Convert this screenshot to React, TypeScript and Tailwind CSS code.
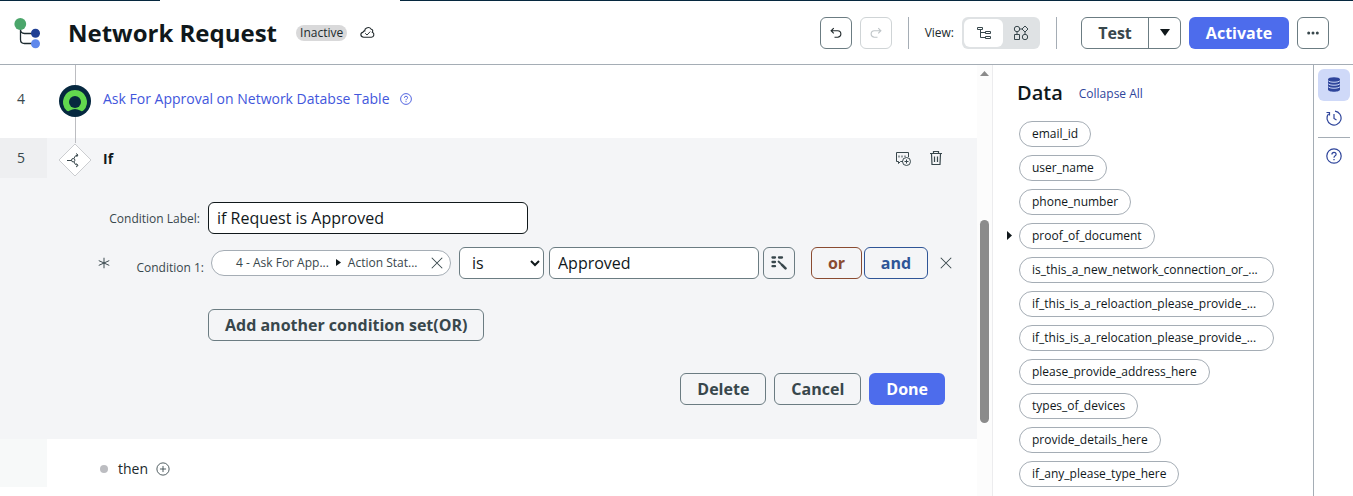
import type { ReactNode } from "react";

const fields = [
  { name: "email_id" },
  { name: "user_name" },
  { name: "phone_number" },
  { name: "proof_of_document", expandable: true },
  { name: "is_this_a_new_network_connection_or_...", wide: true },
  { name: "if_this_is_a_reloaction_please_provide_...", wide: true },
  { name: "if_this_is_a_relocation_please_provide_...", wide: true },
  { name: "please_provide_address_here" },
  { name: "types_of_devices" },
  { name: "provide_details_here" },
  { name: "if_any_please_type_here" },
];

function Icon({ size = 16, className = "", children }: { size?: number; className?: string; children: ReactNode }) {
  return (
    <svg
      width={size}
      height={size}
      viewBox="0 0 16 16"
      fill="none"
      stroke="currentColor"
      className={`shrink-0 ${className}`}
      aria-hidden="true"
    >
      {children}
    </svg>
  );
}

function FlowLogo() {
  return (
    <svg width="28" height="32" viewBox="0 0 28 32" fill="none" className="shrink-0" aria-hidden="true">
      <path d="M6.500 10v12.500q0 4 4 4H21M6.500 12q0 4.500 4 4.500H21" stroke="#1d2b30" strokeWidth="1.300" />
      <circle cx="6.300" cy="7" r="5.900" fill="#4ba66b" />
      <circle cx="21.500" cy="16.200" r="4.500" fill="#1f3f94" />
      <circle cx="21.500" cy="26.800" r="4.500" fill="#5f88ec" />
    </svg>
  );
}

function HelpIcon({ size = 16 }: { size?: number }) {
  return (
    <Icon size={size}>
      <circle cx="8" cy="8" r="7.200" strokeWidth="1.200" />
      <path d="M5.900 6.400Q5.900 4.300 8 4.300t2.100 2q0 1.100-1.200 1.800Q8 8.700 8 9.700" strokeWidth="1.200" />
      <path d="M8 10.900v1.300" strokeWidth="1.300" />
    </Icon>
  );
}

function CloseIcon() {
  return (
    <Icon size={12}>
      <path d="M1 1l14 14M15 1L1 15" strokeWidth="1.400" />
    </Icon>
  );
}

function Header() {
  const square = "flex size-8 items-center justify-center rounded-md border bg-white";
  return (
    <header className="flex h-16 items-center border-b border-[#a5adb5] pt-px pl-3.5 pr-6">
      <FlowLogo />
      <h1 className="ml-[26px] text-2xl font-bold text-[#10181b]">Network Request</h1>
      <span className="ml-[19px] rounded-full bg-[#d9d9da] px-1 text-xs leading-4 text-[#20292c]">Inactive</span>
      <Icon size={15} className="ml-[13px] text-[#20292c]">
        <path d="M4 13h8.200a2.700 2.700 0 0 0 .9-5.200Q14.500 5.200 12 4.500 10 1.700 7 3.200 5 4 5 6.300 3.800 6 3.300 7.600.8 8.200.9 10.600 1.300 13 4 13z" strokeWidth="1.200" />
        <path d="M5.500 8.800l2 1.900 3.400-3.700" />
      </Icon>
      <div className="ml-auto flex items-center">
        <button aria-label="Undo" className={`${square} border-[#6b7c82] text-[#20292c]`}>
          <Icon size={12}>
            <path d="M5 1.500L1.500 5 5 8.500M1.500 5h8.700a4.300 4.300 0 0 1 0 8.600H6" strokeWidth="1.500" />
          </Icon>
        </button>
        <button aria-label="Redo" disabled className={`${square} ml-2 border-[#cfd4d6] text-[#bfc5c8]`}>
          <Icon size={12}>
            <path d="M11 1.500L14.500 5 11 8.500M14.500 5H5.800a4.300 4.300 0 0 0 0 8.600H10" strokeWidth="1.500" />
          </Icon>
        </button>
        <div className="ml-4 h-8 w-px bg-[#a5adb5]" />
        <span className="ml-4 text-xs text-[#20292c]">View:</span>
        <div className="ml-2 flex h-8 items-center rounded-md bg-[#dfe2e4] p-0.5 text-[#38474c]">
          <button aria-label="Tree view" aria-pressed="true" className="flex h-7 w-[39px] items-center justify-center rounded-md bg-white">
            <Icon>
              <path d="M1.500 2.500h5v2h-5zM9.500 6.500h5v2h-5zM9.500 11.500h5v2h-5zM4.500 4.500v8h5M4.500 7.500h5" />
            </Icon>
          </button>
          <button aria-label="Diagram view" className="flex h-7 w-[35px] items-center justify-center">
            <Icon>
              <circle cx="4" cy="4" r="2.700" />
              <path d="M6.700 4h2.300M12 1l3 3-3 3-3-3zM4 6.700v2.300M1.500 9.500h5v5h-5zM12 7v2" />
              <circle cx="12" cy="12" r="2.700" />
            </Icon>
          </button>
        </div>
        <div className="ml-4 h-8 w-px bg-[#a5adb5]" />
        <div className="ml-6 flex h-8 rounded-md border border-[#6b7c82] text-[#38474c]">
          <button className="w-[66px] text-base leading-none font-bold">Test</button>
          <button aria-label="Test options" className="flex w-8 items-center justify-center border-l border-[#6b7c82] text-[#10181b]">
            <svg width="10" height="7" viewBox="0 0 10 7" fill="currentColor" aria-hidden="true">
              <path d="M0 0h10L5 7z" />
            </svg>
          </button>
        </div>
        <button className="ml-2 h-8 w-[100px] rounded-md bg-[#4d6cec] text-base leading-none font-bold text-white">Activate</button>
        <button aria-label="More" className={`${square} ml-2 border-[#6b7c82] text-[#38474c]`}>
          <svg width="12" height="4" viewBox="0 0 12 4" fill="currentColor" aria-hidden="true">
            <circle cx="1.700" cy="2" r="1.500" />
            <circle cx="6" cy="2" r="1.500" />
            <circle cx="10.300" cy="2" r="1.500" />
          </svg>
        </button>
      </div>
    </header>
  );
}

function ApprovalStep() {
  return (
    <section className="flex h-[73px]">
      <span className="flex h-[68px] w-[47px] items-center pl-[17px] text-sm text-[#38474c]">4</span>
      <div className="ml-3 flex w-8 flex-col items-center">
        <div className="h-5 w-px bg-[#bcbdc1]" />
        <svg width="32" height="32" viewBox="0 0 32 32" aria-hidden="true">
          <circle cx="16" cy="16" r="16" fill="#06283f" />
          <path
            d="M16 5a12 12 0 0 0-8.400 20.500q1.600 1.300 3.200 0 5.200-3 10.400 0 1.600 1.300 3.200 0A12 12 0 0 0 16 5z"
            fill="#62d84e"
          />
          <circle cx="16" cy="17" r="6" fill="#06283f" />
        </svg>
        <div className="w-px grow bg-[#bcbdc1]" />
      </div>
      <div className="ml-3 flex h-[68px] items-center gap-2.5 text-[#4256dc]">
        <a href="#step-4" className="text-sm">Ask For Approval on Network Databse Table</a>
        <HelpIcon size={12} />
      </div>
    </section>
  );
}

function ConditionStep() {
  const outlined = "h-8 rounded-md border border-[#6b7c82] px-4 text-base leading-none font-bold text-[#38474c]";
  const label = "shrink-0 text-right text-xs text-[#38474c]";
  const box = "h-8 rounded-md border bg-white text-base text-[#10181b]";
  return (
    <section className="bg-[#f4f5f7] pb-[34px]">
      <div className="flex h-10">
        <span className="flex w-[47px] items-center bg-[#eeeff1] pl-[17px] text-sm text-[#38474c]">5</span>
        <div className="ml-3 flex w-8 flex-col items-center">
          <div className="h-[5px] w-px shrink-0 bg-[#bcbdc1]" />
          <svg width="34" height="34" viewBox="0 0 34 34" fill="none" className="shrink-0" aria-hidden="true">
            <path d="M17 1l16 16-16 16L1 17z" fill="#fff" stroke="#cbcdd0" />
            <g stroke="#38474c">
              <path d="M9 17.500h4.500M16 15.500q.5-3 3.500-3.500M16 18.800q.5 3 3.500 3.500" />
              <circle cx="15.200" cy="17.200" r="1.700" />
              <path d="M18 10.500l2 1.500-1.500 2M18.500 20.500l1.500 2-2 1.500" />
            </g>
          </svg>
        </div>
        <h2 className="ml-3 flex items-center pt-0.5 text-sm font-bold text-[#10181b]">If</h2>
        <div className="ml-auto flex items-center gap-[17px] pr-[33px] text-[#38474c]">
          <button aria-label="Add comment">
            <Icon>
              <path d="M8 11.500H5.500L3.500 13.500v-2H1.500v-9h12V7M4 5.500v2M7 5.500v2M10 5.500v1.500" />
              <circle cx="11.500" cy="11.500" r="4" />
              <path d="M11.500 9.500v4M9.500 11.500h4" />
            </Icon>
          </button>
          <button aria-label="Delete step">
            <Icon>
              <path d="M2 3.500h12M5.500 3.500v-2h5v2M3.500 3.500l.5 11h8l.5-11M6.500 6.500v5.500M9.500 6.500v5.500" strokeWidth="1.200" />
            </Icon>
          </button>
        </div>
      </div>

      <div className="flex items-center pt-6">
        <label htmlFor="condition-label" className={`${label} w-[200px] pt-0.5`}>Condition Label:</label>
        <input id="condition-label" defaultValue="if Request is Approved" className={`${box} ml-2 w-80 border-[#10181b] px-2`} />
      </div>

      <div className="flex items-center pt-[13px] pl-[98px]">
        <Icon size={12} className="text-[#38474c]">
          <path d="M8 1v14M1 4.800l14 6.400M15 4.800L1 11.200" strokeWidth="1.300" />
        </Icon>
        <label htmlFor="operator" className={`${label} w-[94px] pt-2.5`}>Condition 1:</label>
        <div className="ml-[7px] flex h-[26px] w-60 items-center rounded-full border border-[#a5adb5] bg-white pl-6 text-xs text-[#38474c]">
          <span>4 - Ask For App...</span>
          <svg width="5" height="7" viewBox="0 0 5 7" fill="#10181b" className="mx-[7px]" aria-hidden="true">
            <path d="M0 0l5 3.500L0 7z" />
          </svg>
          <span>Action Stat...</span>
          <button aria-label="Remove field" className="mr-[7px] ml-auto"><CloseIcon /></button>
        </div>
        <select id="operator" className={`${box} ml-2 w-[85px] border-[#6b7c82] pl-2`}>
          <option>is</option>
        </select>
        <input aria-label="Condition value" defaultValue="Approved" className={`${box} ml-[5px] w-[210px] border-[#6b7c82] px-2`} />
        <button aria-label="Data pill picker" className="ml-1 flex size-8 items-center justify-center rounded-md border border-[#6b7c82] text-[#38474c]">
          <svg width="16" height="14" viewBox="0 0 16 14" fill="none" stroke="currentColor" aria-hidden="true">
            <path d="M1.500 1.500h2.500M8 1.500h3M1.500 6h2.500M1.500 10.200h2.500" strokeWidth="2.300" strokeLinecap="round" />
            <path d="M7.500 5.500l2.500 2.300" strokeWidth="1.800" strokeLinecap="round" />
            <path d="M11 8.800l3.500 3.500" strokeWidth="2.600" strokeLinecap="round" />
          </svg>
        </button>
        <button className="ml-4 h-8 w-[51px] rounded-md border border-[#8a4b31] text-base leading-none font-bold text-[#8a4b31]">or</button>
        <button className="ml-0.5 h-8 w-16 rounded-md border border-[#2f5597] text-base leading-none font-bold text-[#2f5597]">and</button>
        <button aria-label="Remove condition" className="ml-3 text-[#38474c]"><CloseIcon /></button>
      </div>

      <div className="pt-[30px] pl-52">
        <button className={outlined}>Add another condition set(OR)</button>
      </div>

      <div className="flex justify-end gap-2 pt-8 pr-8">
        <button className={outlined}>Delete</button>
        <button className={outlined}>Cancel</button>
        <button className="h-8 rounded-md bg-[#4d6cec] px-[17px] text-base leading-none font-bold text-white">Done</button>
      </div>
    </section>
  );
}

function DataPanel() {
  return (
    <aside className="w-80 shrink-0 pt-3">
      <div className="flex h-8 items-center gap-4 pl-6">
        <h2 className="text-xl font-semibold text-[#10181b]">Data</h2>
        <button className="pt-0.5 text-xs font-medium text-[#2f459b]">Collapse All</button>
      </div>
      <ul className="flex flex-col gap-2 pt-3">
        {fields.map((f) => (
          <li key={f.name} className="flex items-center pl-3.5">
            <span className="flex w-3 shrink-0 items-center">
              {f.expandable && (
                <svg width="5" height="9" viewBox="0 0 5 9" fill="#10181b" aria-hidden="true">
                  <path d="M0 0l5 4.500L0 9z" />
                </svg>
              )}
            </span>
            <span className={`flex h-[26px] items-center rounded-full border border-[#a5adb5] px-3 text-xs whitespace-nowrap text-[#10181b] ${f.wide ? "w-[255px]" : ""}`}>
              {f.name}
            </span>
          </li>
        ))}
      </ul>
    </aside>
  );
}

function Rail() {
  return (
    <nav className="flex w-10 shrink-0 flex-col items-center border-l border-[#a5adb5] pt-1 text-[#2f459b]">
      <button aria-label="Data" className="flex size-8 items-center justify-center rounded-md bg-[#cfd9f8]">
        <svg width="12" height="15" viewBox="0 0 12 15" aria-hidden="true">
          <path d="M0 2.500v10c0 3 12 3 12 0v-10z" fill="currentColor" />
          <ellipse cx="6" cy="2.500" rx="6" ry="2.300" fill="currentColor" />
          <path d="M0 3.500c1 2.300 11 2.300 12 0M0 6.500c1 2.300 11 2.300 12 0M0 9.500c1 2.300 11 2.300 12 0" fill="none" stroke="#cfd9f8" strokeWidth="1" />
        </svg>
      </button>
      <button aria-label="History" className="mt-[9px]">
        <Icon>
          <path d="M9 1.100A7 7 0 1 1 2.500 3.800M.5 2.500h3v3M8 4v4.500l2.500 1.500" strokeWidth="1.200" />
        </Icon>
      </button>
      <div className="mt-[11px] h-px w-8 bg-[#a5adb5]" />
      <button aria-label="Help" className="mt-2.5"><HelpIcon /></button>
    </nav>
  );
}

export default function App() {
  return (
    <div className="flex h-screen flex-col overflow-hidden bg-white font-['Open_Sans','Noto_Sans',sans-serif]">
      <div className="flex h-px shrink-0 bg-[#06283f]">
        <div className="ml-40 w-60 bg-white" />
      </div>
      <Header />
      <div className="flex min-h-0 grow">
        <main className="min-w-0 grow">
          <ApprovalStep />
          <ConditionStep />
          <div className="flex text-sm text-[#20292c]">
            <div className="h-12 w-[47px] bg-[#f7f9f9]" />
            <div className="ml-[53px] flex h-[60px] items-center">
              <span className="size-2 rounded-full bg-[#bcbdc1]" />
              <span className="ml-2.5">then</span>
              <button aria-label="Add step" className="ml-2">
                <Icon size={14} className="text-[#38474c]">
                  <circle cx="8" cy="8" r="7" />
                  <path d="M8 4.500v7M4.500 8h7" />
                </Icon>
              </button>
            </div>
          </div>
        </main>
        <div className="flex w-4 shrink-0 flex-col items-center border-r border-[#ececee] bg-[#fcfcfc]" aria-hidden="true">
          <svg width="9" height="5" viewBox="0 0 9 5" fill="#8b8b8b" className="mt-1.5">
            <path d="M0 5h9L4.500 0z" />
          </svg>
          <div className="mt-36 h-[203px] w-[9px] rounded-full bg-[#8b8b8b]" />
        </div>
        <DataPanel />
        <Rail />
      </div>
    </div>
  );
}
